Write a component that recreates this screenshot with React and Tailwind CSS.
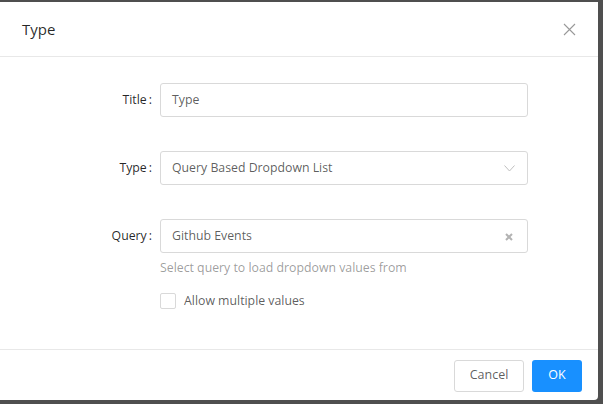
export default function App() {
  const font = { fontFamily: '"Open Sans", "Noto Sans", sans-serif' };

  return (
    <div className="w-[603px] h-[404px] bg-[#4f4f4f] pt-[2px] pr-[5px] overflow-hidden" style={font}>
      <div className="w-[598px] h-[398px] bg-white rounded-br-[4px] flex flex-col">
        {/* header */}
        <div className="h-[55px] border-b border-[#e8e8e8] flex items-center justify-between pl-[22px] pr-[22px]">
          <span className="text-[15px] text-[rgba(0,0,0,0.85)]">Type</span>
          <svg width="13" height="13" viewBox="0 0 13 13" className="text-[#999999]">
            <path d="M1 1 L12 12 M12 1 L1 12" stroke="currentColor" strokeWidth="1.1" fill="none" />
          </svg>
        </div>

        {/* body */}
        <div className="h-[293px] border-b border-[#e8e8e8] pt-[26px] text-[12.3px]">
          <div className="flex items-center h-[34px]">
            <label className="w-[160px] text-right pr-[8px] text-[rgba(0,0,0,0.85)]">Title<span className="ml-[2px]">:</span></label>
            <div className="w-[368px] h-[34px] border border-[#d9d9d9] rounded-[3px] flex items-center pt-[1px] px-[11px] text-[rgba(0,0,0,0.65)]">Type</div>
          </div>

          <div className="flex items-center h-[34px] mt-[34px]">
            <label className="w-[160px] text-right pr-[8px] text-[rgba(0,0,0,0.85)]">Type<span className="ml-[2px]">:</span></label>
            <div className="w-[368px] h-[34px] border border-[#d9d9d9] rounded-[3px] flex items-center justify-between pt-[1px] pl-[11px] pr-[12px] text-[rgba(0,0,0,0.65)]">
              <span>Query Based Dropdown List</span>
              <svg width="11" height="7" viewBox="0 0 11 7" className="text-[#bfbfbf]">
                <path d="M0.5 0.5 L5.5 6 L10.5 0.5" stroke="currentColor" strokeWidth="1" fill="none" />
              </svg>
            </div>
          </div>

          <div className="flex items-center h-[34px] mt-[34px]">
            <label className="w-[160px] text-right pr-[8px] text-[rgba(0,0,0,0.85)]">Query<span className="ml-[2px]">:</span></label>
            <div className="w-[368px] h-[34px] border border-[#d9d9d9] rounded-[3px] flex items-center justify-between pt-[1px] pl-[11px] pr-[14px] text-[rgba(0,0,0,0.65)]">
              <span>Github Events</span>
              <svg width="8" height="8" viewBox="0 0 8 8" className="text-[#b3b3b3]">
                <path d="M1 1 L7 7 M7 1 L1 7" stroke="currentColor" strokeWidth="2" fill="none" />
              </svg>
            </div>
          </div>
          <div className="ml-[160px] mt-[5px] text-[rgba(0,0,0,0.4)] leading-[20px]">Select query to load dropdown values from</div>

          <label className="ml-[160px] mt-[14px] flex items-center gap-[8px] text-[rgba(0,0,0,0.65)]">
            <span className="w-[16px] h-[16px] border border-[#d9d9d9] rounded-[2px] bg-white" />
            <span>Allow multiple values</span>
          </label>
        </div>

        {/* footer */}
        <div className="flex-1 flex items-center justify-end gap-[8px] pr-[16px] pt-[1px] text-[12.5px]">
          <button className="w-[70px] h-[32px] border border-[#d9d9d9] rounded-[3px] bg-white text-[rgba(0,0,0,0.65)]">Cancel</button>
          <button className="w-[50px] h-[32px] rounded-[3px] bg-[#1890ff] text-white">OK</button>
        </div>
      </div>
    </div>
  );
}
